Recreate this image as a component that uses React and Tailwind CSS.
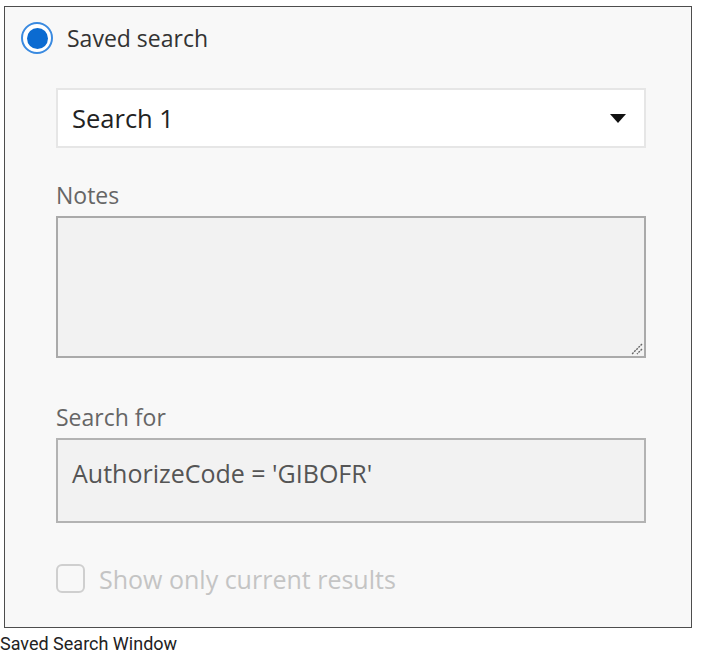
export default function App() {
  return (
    <div className="w-[704px] h-[671px] bg-white relative" style={{ fontFamily: '"Open Sans", sans-serif' }}>
      <div className="pt-[6px] pl-[4px]">
        <div className="w-[688px] h-[622px] border border-[#4d4d4d] bg-[#f8f8f8] pl-[51px] pr-[45px]">
          {/* radio row */}
          <div className="flex items-center h-[40px] mt-[11px] -ml-[35px]">
            <span className="w-[32px] h-[32px] rounded-full border-2 border-[#3a8ae0] flex items-center justify-center bg-white">
              <span className="w-[21px] h-[21px] rounded-full bg-[#0b6bd1]" />
            </span>
            <span className="ml-[14px] text-[23px] leading-[30px] text-[#333]">Saved search</span>
          </div>

          {/* dropdown */}
          <div className="mt-[30px] h-[60px] bg-white border-2 border-[#e6e6e6] flex items-center justify-between pl-[14px] pr-[18px]">
            <span className="text-[25.5px] leading-[30px] text-[#222]">Search 1</span>
            <svg width="16" height="9" viewBox="0 0 16 9">
              <path d="M0 0 L16 0 L8 9 Z" fill="#111" />
            </svg>
          </div>

          <div className="mt-[32px] text-[23px] text-[#666] leading-[30px]">Notes</div>
          <div className="relative mt-[6px] h-[142px] bg-[#f2f2f2] border-2 border-[#aaaaaa]">
            <svg className="absolute right-[1px] bottom-[1px]" width="14" height="14" viewBox="0 0 14 14">
              <path d="M13 3 L3 13 M13 8 L8 13" stroke="#666" strokeWidth="1.4" strokeDasharray="2 1" />
            </svg>
          </div>

          <div className="mt-[44px] text-[23px] text-[#666] leading-[30px]">Search for</div>
          <div className="mt-[6px] h-[85px] bg-[#f2f2f2] border-2 border-[#b3b3b3] pl-[14px] pt-[18px]">
            <span className="text-[25px] leading-[30px] text-[#555]">AuthorizeCode = 'GIBOFR'</span>
          </div>

          <div className="flex items-center mt-[41px] h-[29px]">
            <span className="w-[29px] h-[29px] rounded-[6px] border-2 border-[#cfcfcf] bg-[#f8f8f8]" />
            <span className="ml-[14px] text-[25px] leading-[30px] text-[#c4c4c4]">Show only current results</span>
          </div>
        </div>
      </div>
      <div className="mt-[5px] text-[18px] text-[#222] leading-[22px]" style={{ fontFamily: 'Roboto, sans-serif' }}>
        Saved Search Window
      </div>
    </div>
  );
}
